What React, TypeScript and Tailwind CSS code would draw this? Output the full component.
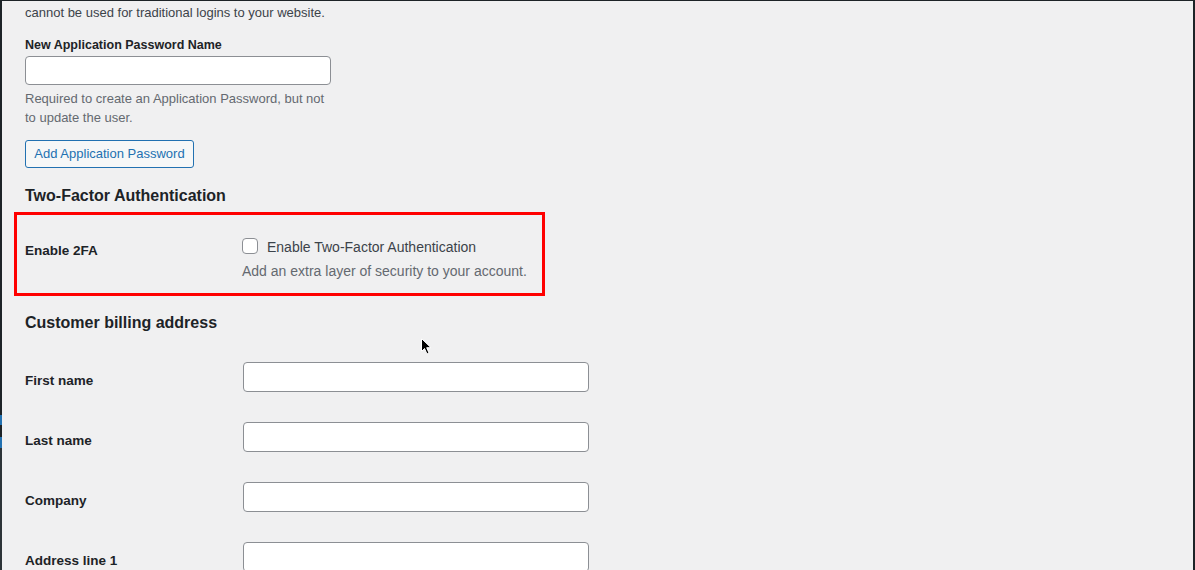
import React from 'react';

const font = { fontFamily: '"Liberation Sans", "Noto Sans", Arial, sans-serif' };

const billingFields = ['First name', 'Last name', 'Company', 'Address line 1'];

const FieldRow: React.FC<{ label: string }> = ({ label }) => (
  <div className="flex items-start h-[60px]">
    <label className="w-[218px] pt-[9px] text-[13.5px] leading-[20px] font-bold text-[#1d2327]">{label}</label>
    <input
      type="text"
      className="w-[346px] h-[30px] bg-white border border-[#8c8f94] rounded-[4px] px-2 text-[14px] outline-none"
    />
  </div>
);

const App: React.FC = () => {
  return (
    <div
      className="relative flex w-[1195px] h-[570px] overflow-hidden bg-[#f0f0f1] border-t border-r-2 border-[#1d2327]"
      style={font}
    >
      {/* admin menu edge */}
      <div className="flex flex-col w-[2px] shrink-0">
        <div className="h-[414px] bg-[#1d2327]" />
        <div className="h-[10px] bg-[#2271b1]" />
        <div className="h-[12px] bg-[#1d2327]" />
        <div className="h-[11px] bg-[#2271b1]" />
        <div className="flex-1 bg-[#2c3338]" />
      </div>

      <div className="flex-1 pl-[23px] text-[#3c434a]">
        <p className="mt-[2px] text-[13px] leading-[19px]">cannot be used for traditional logins to your website.</p>

        <div className="mt-[14px] text-[12.5px] leading-[19px] font-bold text-[#1d2327]">New Application Password Name</div>
        <input
          type="text"
          className="block mt-[1px] w-[306px] h-[29px] bg-white border border-[#8c8f94] rounded-[4px] px-2 outline-none"
        />
        <p className="mt-[4px] text-[13px] leading-[19px] text-[#646970]">
          Required to create an Application Password, but not
          <br />
          to update the user.
        </p>

        <button
          type="button"
          className="mt-[13px] w-[169px] h-[28px] flex items-center justify-center bg-[#f6f7f7] border border-[#2271b1] rounded-[3px] text-[13px] text-[#2271b1]"
        >
          Add Application Password
        </button>

        <h2 className="mt-[16px] text-[16px] leading-[24px] font-bold text-[#1d2327]">Two-Factor Authentication</h2>

        {/* 2FA row, outlined in red */}
        <div className="mt-[4px] ml-[-11px] w-[531px] h-[84px] border-[3px] border-[#ff0000] flex items-start pl-[8px] pt-[23px]">
          <div className="w-[217px] pt-[3px] text-[13.5px] leading-[20px] font-bold text-[#1d2327]">Enable 2FA</div>
          <div className="flex flex-col">
            <label className="flex items-center h-[16px]">
              <span className="w-4 h-4 bg-white border border-[#8c8f94] rounded-[4px]" />
              <span className="ml-[9px] pt-[1px] text-[14px] leading-[20px] text-[#3c434a]">Enable Two-Factor Authentication</span>
            </label>
            <p className="mt-[8px] text-[14px] leading-[19px] text-[#646970]">Add an extra layer of security to your account.</p>
          </div>
        </div>

        <h2 className="mt-[15px] text-[16px] leading-[24px] font-bold text-[#1d2327]">Customer billing address</h2>

        <div className="mt-[27px]">
          {billingFields.map((f) => (
            <FieldRow key={f} label={f} />
          ))}
        </div>
      </div>

      {/* mouse pointer */}
      <svg className="absolute left-[421px] top-[337px]" width="11" height="17" viewBox="0 0 11 17">
        <path d="M0.5 0.5 L0.5 13.5 L3.5 10.5 L6 16 L8 15 L5.7 9.7 L10 9.7 Z" fill="#000" stroke="#fff" strokeWidth="1" />
      </svg>
    </div>
  );
};

export default App;
